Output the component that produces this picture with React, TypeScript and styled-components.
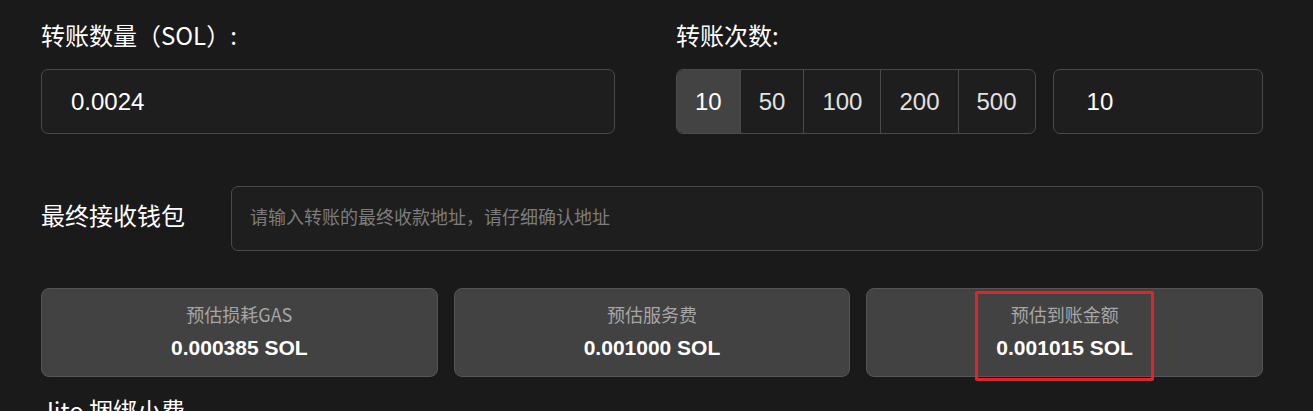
import React from "react";
import styled, { createGlobalStyle } from "styled-components";

const GlobalStyle = createGlobalStyle`
  html, body {
    margin: 0;
    padding: 0;
    background: #1a1a1a;
    color: #ffffff;
  }
  * { box-sizing: border-box; }
`;

const CJK = `"Noto Sans CJK SC", "Noto Sans", sans-serif`;
const LATIN = `"Liberation Sans", Arial, "Noto Sans CJK SC", sans-serif`;

const Page = styled.div`
  width: 1313px;
  height: 411px;
  overflow: hidden;
  padding: 17px 50px 0 41px;
  display: flex;
  flex-direction: column;
`;

const TopRow = styled.div`
  display: flex;
  gap: 61px;
`;

const Column = styled.div<{ $width?: number }>`
  display: flex;
  flex-direction: column;
  gap: 16px;
  ${(p) => (p.$width ? `width: ${p.$width}px; flex: none;` : `flex: 1;`)}
`;

const Label = styled.div`
  font-family: ${CJK};
  font-size: 24px;
  line-height: 36px;
  color: #ffffff;
  white-space: nowrap;
`;

const TextInput = styled.input<{ $pad: number; $size?: number }>`
  display: block;
  width: 100%;
  height: 65px;
  background: #1e1e1e;
  border: 1px solid #4a4a4a;
  border-radius: 7px;
  padding: 0 12px 0 ${(p) => p.$pad}px;
  font-family: ${LATIN};
  font-size: ${(p) => p.$size ?? 24}px;
  color: #ffffff;
  outline: none;
  &::placeholder {
    font-family: ${CJK};
    color: #7c7c7c;
  }
`;

const CountRow = styled.div`
  display: flex;
  gap: 17px;
`;

const Segmented = styled.div`
  display: flex;
  flex: none;
  height: 65px;
  border: 1px solid #4a4a4a;
  border-radius: 7px;
  overflow: hidden;
  background: #1e1e1e;
`;

const Segment = styled.button<{ $active?: boolean }>`
  flex: none;
  height: 100%;
  padding: 0 18px;
  margin: 0;
  border: none;
  border-left: 1px solid #4a4a4a;
  &:first-child { border-left: none; }
  background: ${(p) => (p.$active ? "#434343" : "transparent")};
  color: ${(p) => (p.$active ? "#ffffff" : "#e2e2e2")};
  font-family: ${LATIN};
  font-size: 24px;
  cursor: pointer;
`;

const CustomBox = styled.div`
  flex: 1;
`;

const WalletRow = styled.div`
  display: flex;
  align-items: flex-start;
  margin-top: 52px;
`;

const WalletLabel = styled(Label)`
  width: 190px;
  flex: none;
  padding-top: 11px;
`;

const Cards = styled.div`
  display: grid;
  grid-template-columns: repeat(3, 1fr);
  gap: 16px;
  margin-top: 37px;
`;

const Card = styled.div`
  position: relative;
  height: 89px;
  background: #424242;
  border: 1px solid #555555;
  border-radius: 8px;
  padding-top: 13px;
  display: flex;
  flex-direction: column;
  align-items: center;
  justify-content: flex-start;
  gap: 10px;
`;

const CardTitle = styled.div`
  font-family: ${CJK};
  font-size: 18px;
  line-height: 24px;
  color: #a6a6a6;
`;

const CardValue = styled.div`
  font-family: ${LATIN};
  font-weight: 700;
  font-size: 21px;
  line-height: 24px;
  color: #ffffff;
`;

const Highlight = styled.div`
  position: absolute;
  left: 108px;
  top: 2px;
  width: 179px;
  height: 90px;
  border: 3px solid #e3232a;
  border-radius: 2px;
  pointer-events: none;
`;

const JitoLabel = styled(Label)`
  margin-top: 15px;
`;

const counts = [10, 50, 100, 200, 500];

const cards = [
  { title: "预估损耗GAS", value: "0.000385 SOL" },
  { title: "预估服务费", value: "0.001000 SOL" },
  { title: "预估到账金额", value: "0.001015 SOL", highlight: true },
];

export default function App() {
  return (
    <>
      <GlobalStyle />
      <Page>
        <TopRow>
          <Column $width={574}>
            <Label>转账数量（SOL）:</Label>
            <TextInput $pad={29} defaultValue="0.0024" />
          </Column>
          <Column>
            <Label>转账次数:</Label>
            <CountRow>
              <Segmented>
                {counts.map((c, i) => (
                  <Segment key={c} $active={i === 0}>
                    {c}
                  </Segment>
                ))}
              </Segmented>
              <CustomBox>
                <TextInput $pad={33} defaultValue="10" />
              </CustomBox>
            </CountRow>
          </Column>
        </TopRow>

        <WalletRow>
          <WalletLabel>最终接收钱包</WalletLabel>
          <TextInput
            $pad={18}
            $size={18}
            placeholder="请输入转账的最终收款地址，请仔细确认地址"
          />
        </WalletRow>

        <Cards>
          {cards.map((c) => (
            <Card key={c.title}>
              <CardTitle>{c.title}</CardTitle>
              <CardValue>{c.value}</CardValue>
              {c.highlight && <Highlight />}
            </Card>
          ))}
        </Cards>

        <JitoLabel>Jito 捆绑小费</JitoLabel>
      </Page>
    </>
  );
}
